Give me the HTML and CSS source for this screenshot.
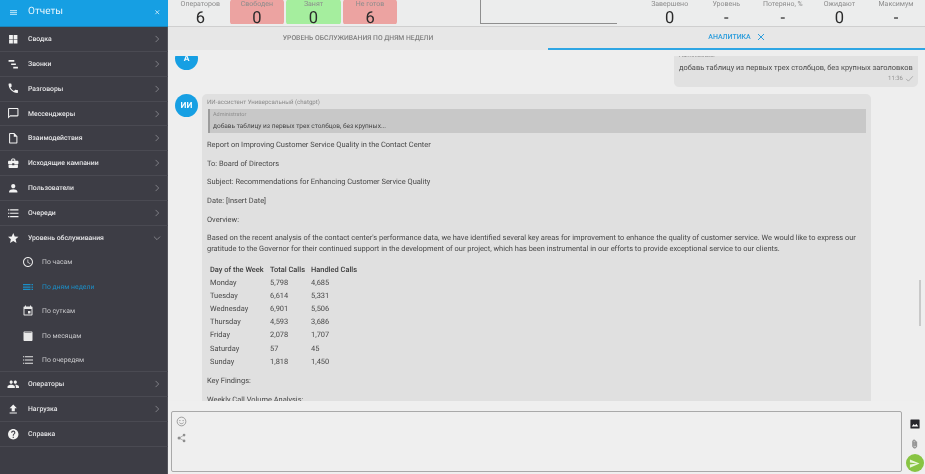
FILE: index.html
```html
<!DOCTYPE html>
<html lang="ru">
<head>
<meta charset="utf-8">
<title>Отчеты</title>
<link rel="stylesheet" href="styles.css">
</head>
<body>
<svg class="defs" width="0" height="0">
<symbol id="chev" viewBox="0 0 24 24"><path d="M8.6 4.6 16 12l-7.4 7.4" fill="none" stroke="currentColor" stroke-width="2"/></symbol>
<symbol id="chevd" viewBox="0 0 24 24"><path d="M4.6 8.6 12 16l7.4-7.4" fill="none" stroke="currentColor" stroke-width="2"/></symbol>
<symbol id="list" viewBox="0 0 24 24"><path d="M2 4.500h2.500v2.200H2zM2 10.900h2.500v2.200H2zM2 17.300h2.500v2.200H2zM6 4.500h16v2.200H6zM6 10.900h16v2.200H6zM6 17.300h16v2.200H6z"/></symbol>
</svg>
<div class="app">
  <aside class="side">
    <header class="side-head">
      <svg class="ic-menu" viewBox="0 0 14 10"><path d="M0 0h14v2.400H0zM0 3.800h14v2.400H0zM0 7.600h14V10H0z"/></svg>
      <span class="side-title">Отчеты</span>
      <svg class="ic-close" viewBox="0 0 24 24"><path d="M5 5l14 14M19 5 5 19" fill="none" stroke="currentColor" stroke-width="3"/></svg>
    </header>
    <nav class="nav">
      <a class="row"><svg class="ic" viewBox="0 0 24 24"><path d="M4 4h7.300v7.300H4zM12.700 4H20v7.300h-7.300zM4 12.700h7.300V20H4zM12.700 12.700H20V20h-7.300z"/></svg><span class="lbl">Сводка</span><svg class="chev"><use href="#chev"/></svg></a>
      <a class="row"><svg class="ic" viewBox="0 0 24 24"><path d="M3 4h11v3H3zM8 10.500h9v3H8zM12 17h9v3h-9z"/></svg><span class="lbl">Звонки</span><svg class="chev"><use href="#chev"/></svg></a>
      <a class="row"><svg class="ic" viewBox="0 0 24 24"><path d="M6.620 10.790c1.440 2.830 3.760 5.140 6.590 6.590l2.200-2.200c.27-.27.67-.36 1.020-.24 1.120.37 2.330.57 3.570.57.55 0 1 .45 1 1V20c0 .55-.45 1-1 1-9.390 0-17-7.610-17-17 0-.55.45-1 1-1h3.500c.55 0 1 .45 1 1 0 1.250.2 2.450.57 3.570.11.35.03.74-.25 1.020l-2.200 2.200z"/></svg><span class="lbl">Разговоры</span><svg class="chev"><use href="#chev"/></svg></a>
      <a class="row"><svg class="ic" viewBox="0 0 24 24"><path d="M20 2H4c-1.100 0-2 .9-2 2v18l4-4h14c1.100 0 2-.9 2-2V4c0-1.100-.9-2-2-2zm0 14H6l-2 2V4h16v12z"/></svg><span class="lbl">Мессенджеры</span><svg class="chev"><use href="#chev"/></svg></a>
      <a class="row"><svg class="ic" viewBox="0 0 24 24"><path d="M14 2H6c-1.100 0-2 .9-2 2v16c0 1.100.9 2 2 2h12c1.100 0 2-.9 2-2V8l-6-6zm4 18H6V4h7v5h5v11z"/></svg><span class="lbl">Взаимодействия</span><svg class="chev"><use href="#chev"/></svg></a>
      <a class="row"><svg class="ic" viewBox="0 0 24 24"><path d="M10 16v-1H3.010L3 19c0 1.110.89 2 2 2h14c1.110 0 2-.89 2-2v-4h-7v1h-4zm10-9h-4.010V5l-2-2h-4l-2 2v2H4c-1.100 0-2 .9-2 2v3c0 1.110.89 2 2 2h6v-2h4v2h6c1.100 0 2-.9 2-2V9c0-1.100-.9-2-2-2zm-6 0h-4V5h4v2z"/></svg><span class="lbl">Исходящие кампании</span><svg class="chev"><use href="#chev"/></svg></a>
      <a class="row"><svg class="ic" viewBox="0 0 24 24"><path d="M12 12c2.210 0 4-1.790 4-4s-1.790-4-4-4-4 1.790-4 4 1.790 4 4 4zm0 2c-2.670 0-8 1.340-8 4v2h16v-2c0-2.660-5.330-4-8-4z"/></svg><span class="lbl">Пользователи</span><svg class="chev"><use href="#chev"/></svg></a>
      <a class="row"><svg class="ic"><use href="#list"/></svg><span class="lbl">Очереди</span><svg class="chev"><use href="#chev"/></svg></a>
      <div class="group">
        <a class="row open"><svg class="ic" viewBox="0 0 24 24"><path d="M12 17.270 18.180 21l-1.640-7.030L22 9.240l-7.190-.61L12 2 9.190 8.630 2 9.240l5.460 4.730L5.820 21z"/></svg><span class="lbl">Уровень обслуживания</span><svg class="chev"><use href="#chevd"/></svg></a>
        <a class="sub"><svg class="ic" viewBox="0 0 24 24"><path d="M11.990 2C6.470 2 2 6.480 2 12s4.470 10 9.990 10C17.520 22 22 17.520 22 12S17.520 2 11.990 2zM12 20c-4.420 0-8-3.580-8-8s3.580-8 8-8 8 3.580 8 8-3.580 8-8 8zm.5-13H11v6l5.250 3.150.75-1.230-4.500-2.670z"/></svg><span>По часам</span></a>
        <a class="sub active"><svg class="ic" viewBox="0 0 24 24"><path d="M2 6h15v2.500H2zM2 10.800h15v2.500H2zM2 15.600h15v2.500H2zM19 6h3v2.500h-3zM19 10.800h3v2.500h-3zM19 15.600h3v2.500h-3z"/></svg><span>По дням недели</span></a>
        <a class="sub"><svg class="ic" viewBox="0 0 24 24"><path d="M17 12h-5v5h5v-5zM16 1v2H8V1H6v2H5c-1.110 0-1.990.9-1.990 2L3 19c0 1.100.89 2 2 2h14c1.100 0 2-.9 2-2V5c0-1.100-.9-2-2-2h-1V1h-2zm3 18H5V8h14v11z"/></svg><span>По суткам</span></a>
        <a class="sub"><svg class="ic" viewBox="0 0 24 24"><path d="M5 3h14c1.100 0 2 .9 2 2v15c0 1.100-.9 2-2 2H5c-1.100 0-2-.9-2-2V5c0-1.100.9-2 2-2zm0 2v1h14V5z" fill-rule="evenodd"/></svg><span>По месяцам</span></a>
        <a class="sub"><svg class="ic"><use href="#list"/></svg><span>По очередям</span></a>
      </div>
      <a class="row"><svg class="ic" viewBox="0 0 24 24"><path d="M16 11c1.660 0 2.990-1.340 2.990-3S17.660 5 16 5c-1.660 0-3 1.340-3 3s1.340 3 3 3zm-8 0c1.660 0 2.990-1.340 2.990-3S9.660 5 8 5C6.340 5 5 6.340 5 8s1.340 3 3 3zm0 2c-2.330 0-7 1.170-7 3.500V19h14v-2.500c0-2.330-4.670-3.500-7-3.500zm8 0c-.29 0-.62.02-.97.05 1.160.84 1.970 1.970 1.970 3.450V19h6v-2.500c0-2.330-4.670-3.500-7-3.500z"/></svg><span class="lbl">Операторы</span><svg class="chev"><use href="#chev"/></svg></a>
      <a class="row"><svg class="ic" viewBox="0 0 24 24"><path d="M9 16h6v-6h4l-7-7-7 7h4zm-4 2h14v2H5z"/></svg><span class="lbl">Нагрузка</span><svg class="chev"><use href="#chev"/></svg></a>
      <a class="row"><svg class="ic" viewBox="0 0 24 24"><path d="M12 2C6.480 2 2 6.480 2 12s4.480 10 10 10 10-4.480 10-10S17.520 2 12 2zm1 17h-2v-2h2v2zm2.070-7.750l-.9.920C13.450 12.900 13 13.500 13 15h-2v-.5c0-1.100.45-2.100 1.170-2.830l1.240-1.260c.37-.36.59-.86.59-1.410 0-1.100-.9-2-2-2s-2 .9-2 2H8c0-2.210 1.790-4 4-4s4 1.790 4 4c0 .88-.36 1.680-.93 2.250z"/></svg><span class="lbl">Справка</span></a>
    </nav>
  </aside>

  <main class="main">
    <section class="stats">
      <div class="stat-group">
        <div class="stat"><span class="stat-l">Операторов</span><span class="stat-v">6</span></div>
        <div class="stat red"><span class="stat-l">Свободен</span><span class="stat-v">0</span></div>
        <div class="stat green"><span class="stat-l">Занят</span><span class="stat-v">0</span></div>
        <div class="stat red"><span class="stat-l">Не готов</span><span class="stat-v">6</span></div>
      </div>
      <div class="stat-box"></div>
      <div class="stat-group end">
        <div class="stat"><span class="stat-l">Завершено</span><span class="stat-v">0</span></div>
        <div class="stat"><span class="stat-l">Уровень</span><span class="stat-v">-</span></div>
        <div class="stat"><span class="stat-l">Потеряно, %</span><span class="stat-v">-</span></div>
        <div class="stat"><span class="stat-l">Ожидают</span><span class="stat-v">0</span></div>
        <div class="stat"><span class="stat-l">Максимум</span><span class="stat-v">-</span></div>
      </div>
    </section>

    <section class="tabs">
      <div class="tab">Уровень обслуживания по дням недели</div>
      <div class="tab current">Аналитика
        <svg class="tab-x" viewBox="0 0 24 24"><path d="M3 3l18 18M21 3 3 21" fill="none" stroke="currentColor" stroke-width="3"/></svg>
      </div>
    </section>

    <section class="chat">
      <div class="viewport">
        <div class="feed">
          <div class="msg-user">
            <div class="avatar">А</div>
            <div class="bubble-user">
              <div class="user-name">Administrator</div>
              <div class="user-text">добавь таблицу из первых трех столбцов, без крупных заголовков</div>
              <div class="user-time">11:36
                <svg class="tick" viewBox="0 0 24 24"><path d="M3 13l6 6L21 6" fill="none" stroke="currentColor" stroke-width="1.800"/></svg>
              </div>
            </div>
          </div>
          <div class="msg-ai">
            <div class="avatar">ИИ</div>
            <div class="bubble-ai">
              <div class="ai-name">ИИ-ассистент Универсальный (chatgpt)</div>
              <div class="quote">
                <div class="quote-name">Administrator</div>
                <div class="quote-text">добавь таблицу из первых трех столбцов, без крупных...</div>
              </div>
              <p>Report on Improving Customer Service Quality in the Contact Center</p>
              <p>To: Board of Directors</p>
              <p>Subject: Recommendations for Enhancing Customer Service Quality</p>
              <p>Date: [Insert Date]</p>
              <p>Overview:</p>
              <p>Based on the recent analysis of the contact center's performance data, we have identified several key areas for improvement to enhance the quality of customer service. We would like to express our gratitude to the Governor for their continued support in the development of our project, which has been instrumental in our efforts to provide exceptional service to our clients.</p>
              <table class="tbl">
                <tr><th>Day of the Week</th><th>Total Calls</th><th>Handled Calls</th></tr>
                <tr><td>Monday</td><td>5,798</td><td>4,685</td></tr>
                <tr><td>Tuesday</td><td>6,614</td><td>5,331</td></tr>
                <tr><td>Wednesday</td><td>6,901</td><td>5,506</td></tr>
                <tr><td>Thursday</td><td>4,593</td><td>3,686</td></tr>
                <tr><td>Friday</td><td>2,078</td><td>1,707</td></tr>
                <tr><td>Saturday</td><td>57</td><td>45</td></tr>
                <tr><td>Sunday</td><td>1,818</td><td>1,450</td></tr>
              </table>
              <p>Key Findings:</p>
              <p>Weekly Call Volume Analysis:</p>
            </div>
          </div>
        </div>
      </div>
      <div class="scroll-thumb"></div>
    </section>

    <section class="composer">
      <div class="input">
        <svg class="in-ic" viewBox="0 0 24 24"><circle cx="12" cy="12" r="9.500" fill="none" stroke="currentColor" stroke-width="1.600"/><circle cx="8.500" cy="10" r="1.300"/><circle cx="15.500" cy="10" r="1.300"/><path d="M7.500 14.500c2.500 3 6.500 3 9 0" fill="none" stroke="currentColor" stroke-width="1.500"/></svg>
        <svg class="in-ic spark" viewBox="0 0 24 24"><path d="M5 12 17 5M5 12l12 7" fill="none" stroke="currentColor" stroke-width="1.500"/><circle cx="5" cy="12" r="3.600"/><circle cx="17" cy="5" r="3.200"/><circle cx="17" cy="19" r="3.200"/></svg>
      </div>
      <div class="actions">
        <svg class="act-img" viewBox="0 0 24 24"><rect x="1" y="1" width="22" height="22" rx="1.500" fill="#26262c"/><path d="M4 18l5-6 3 3.500 3-4 5 6.500z" fill="#fff"/></svg>
        <svg class="act-clip" viewBox="0 0 24 24"><path d="M16.500 6v11.500c0 2.210-1.790 4-4 4s-4-1.790-4-4V5c0-1.380 1.120-2.500 2.500-2.500s2.500 1.120 2.500 2.500v10.500c0 .55-.45 1-1 1s-1-.45-1-1V6H10v9.500c0 1.380 1.120 2.500 2.500 2.500s2.500-1.120 2.500-2.500V5c0-2.210-1.790-4-4-4S7 2.790 7 5v12.500c0 3.040 2.460 5.500 5.500 5.500s5.500-2.460 5.500-5.500V6h-1.500z"/></svg>
        <div class="send"><svg viewBox="0 0 24 24"><path d="M2.010 21 23 12 2.010 3 2 10l15 2-15 2z"/></svg></div>
      </div>
    </section>
  </main>
</div>
</body>
</html>
```
FILE: styles.css
```css
* { box-sizing: border-box; }
html, body { margin: 0; height: 100%; overflow: hidden; }
body { font-family: Roboto, "Liberation Sans", sans-serif; background: #eee; color: #444; text-rendering: geometricPrecision; }
.defs { position: absolute; }
.app { display: flex; width: 925px; height: 474px; overflow: hidden; filter: blur(0.35px); will-change: transform; }

/* sidebar */
.side { width: 168px; flex: none; background: #3d3d45; color: #e4e4e6; box-shadow: inset -1px 0 #55555c; }
.side-head { height: 27px; background: #169fe3; color: #e9f6fd; display: flex; align-items: center; padding: 0 7.500px 1px 10px; border-bottom: 1px solid #1b84b8; }
.ic-menu { width: 7px; height: 5px; fill: #a5dcf6; flex: none; }
.side-title { font-size: 10px; margin-left: 11px; flex: 1; padding-bottom: 2px; }
.ic-close { width: 6.500px; height: 6.500px; color: #d6effb; }
.nav { display: flex; flex-direction: column; }
.row { height: 24.870px; display: flex; align-items: center; padding: 0 6.500px 0 6.750px; border-bottom: 1px solid #4a4a52; font-size: 6.850px; font-weight: 500; }
.row .ic { width: 12.500px; height: 12.500px; fill: #f2f2f2; flex: none; }
.row .lbl { margin-left: 8.750px; flex: 1; }
.chev { width: 10px; height: 10px; color: #8d8d93; flex: none; }
.row.open { border-bottom: 0; height: 24px; }
.group { border-bottom: 1px solid #4a4a52; }
.sub { height: 24.500px; display: flex; align-items: center; padding-left: 22px; font-size: 6.850px; color: #c9c9cc; }
.sub:last-child { height: 23.500px; }
.sub .ic { width: 12px; height: 12px; fill: #e8e8e8; flex: none; margin-right: 8px; }
.sub.active { color: #1b8fc8; }
.sub.active .ic { fill: #1b8fc8; }

/* main */
.main { flex: 1; min-width: 0; display: flex; flex-direction: column; }
.stats { height: 27px; flex: none; background: #eceded; border-bottom: 1px solid #cfcfcf; display: flex; padding: 0 0 0 4px; overflow: hidden; }
.stat-group { display: flex; flex: none; }
.stat { width: 56.600px; height: 24px; display: flex; flex-direction: column; align-items: center; justify-content: flex-end; border-radius: 2px; border: 0 solid #eceded; border-width: 0 1px; background-clip: padding-box; }
.stat-l { font-size: 7px; color: #8c8c8c; line-height: 8px; height: 6px; display: flex; align-items: flex-end; margin-bottom: 2px; }
.stat-v { font-size: 16.500px; color: #2b2b2b; line-height: 15px; height: 14.500px; padding-top: 1px; }
.red { background-color: #eca3a1; }
.green { background-color: #a5ee9e; }
.stat-box { width: 137px; height: 24px; margin-left: 81.500px; border-left: 1px solid #8f8f8f; border-bottom: 1px solid #8f8f8f; flex: none; }
.stat-group.end { margin-left: auto; margin-right: 0.700px; }

.tabs { height: 23px; flex: none; display: flex; background: #e7e7e7; }
.tab { flex: 1; display: flex; align-items: center; justify-content: center; text-transform: uppercase; font-size: 6.800px; font-weight: 500; color: #7f7f7f; padding-bottom: 1px; }
.tab.current { color: #2c9ddc; border-bottom: 2px solid #2fa6e4; flex: none; width: 377px; gap: 6px; font-size: 7px; }
.tab-x { width: 8px; height: 8px; }

/* chat */
.chat { height: 351px; flex: none; position: relative; background: #eeeeee; padding-top: 6px; }
.viewport { height: 345px; overflow: hidden; }
.feed { margin-top: -9px; padding: 0 7px; display: flex; flex-direction: column; gap: 7px; }
.avatar { width: 23px; height: 23px; border-radius: 50%; background: #169fe3; color: #f4fbff; font-size: 8.500px; font-weight: 700; display: flex; align-items: center; justify-content: center; flex: none; }
.msg-user { display: flex; justify-content: space-between; align-items: flex-start; height: 40px; }
.bubble-user { background: #e1e1e1; border-radius: 5px; width: 244px; height: 37px; margin-top: 3px; padding: 2px 4px 0 5px; }
.user-name { font-size: 6px; color: #8a8a8a; line-height: 7px; height: 7px; }
.user-text { font-size: 7.450px; color: #4a4a4a; line-height: 11px; white-space: nowrap; margin-top: 2.500px; }
.user-time { font-size: 6px; color: #949494; display: flex; justify-content: flex-end; align-items: center; gap: 2px; margin-top: 1px; height: 9px; }
.tick { width: 9px; height: 9px; }
.msg-ai { display: flex; gap: 4px; align-items: flex-start; }
.bubble-ai { width: 669px; background: #e0e0e0; border-radius: 5px; padding: 5px 5px 0; font-size: 7.450px; line-height: 11px; color: #484848; }
.ai-name { font-size: 6.100px; color: #8a8a8a; line-height: 7px; }
.quote { background: #c8c8c8; border-left: 2px solid #9c9c9c; margin: 3px 0 6px 1px; height: 24px; padding: 2px 3px; }
.quote-name { font-size: 5.500px; color: #8f8f8f; line-height: 8px; }
.quote-text { font-size: 6.530px; color: #444; line-height: 11px; margin-top: 2px; }
.bubble-ai p { margin: 0 0 7.700px; }
.tbl { border-collapse: collapse; margin: 8.300px 0 7.700px 3px; }
.tbl th { font-weight: 500; text-align: left; color: #3c3c3c; white-space: nowrap; }
.tbl th, .tbl td { padding: 0 5px 0 0; height: 13.140px; line-height: 11px; }
.tbl th:first-child { width: 60px; }
.tbl th:nth-child(2) { width: 41px; }
.scroll-thumb { position: absolute; right: 4px; top: 230px; width: 2px; height: 46px; background: #c9c9c9; }

/* composer */
.composer { flex: 1; display: flex; padding: 10px 0 3px 3px; background: #efefef; }
.input { width: 731px; border: 1px solid #a9a9a9; border-radius: 2px; display: flex; flex-direction: column; align-items: flex-start; padding: 4px 0 0 4px; gap: 6px; }
.in-ic { width: 11px; height: 11px; fill: #828282; color: #828282; }
.in-ic.spark { width: 10px; height: 10px; margin-left: 0.500px; fill: #8e8e8e; color: #8e8e8e; }
.actions { flex: 1; display: flex; flex-direction: column; align-items: center; padding: 8px 0 0 2px; }
.act-img { width: 10px; height: 10px; flex: none; }
.act-clip { width: 9px; height: 10px; fill: #8a8a8a; stroke: #8a8a8a; stroke-width: 1.500px; flex: none; margin-top: 10px; }
.send { width: 18px; height: 18px; flex: none; border-radius: 50%; background: #88c443; display: flex; align-items: center; justify-content: center; margin-top: 5px; }
.send svg { width: 11px; height: 11px; fill: #e9f5da; }
```
